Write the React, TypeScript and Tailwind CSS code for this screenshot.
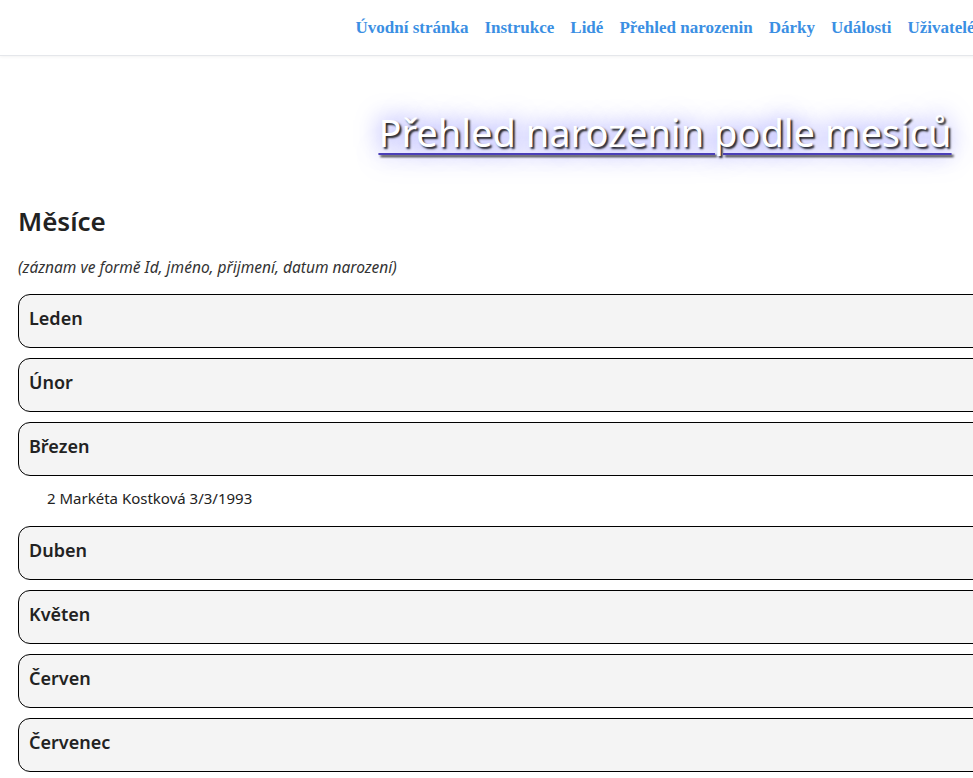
const navItems = ["Úvodní stránka", "Instrukce", "Lidé", "Přehled narozenin", "Dárky", "Události", "Uživatelé"];

const months = [
  { name: "Leden", people: [] as string[] },
  { name: "Únor", people: [] },
  { name: "Březen", people: ["2 Markéta Kostková 3/3/1993"] },
  { name: "Duben", people: [] },
  { name: "Květen", people: [] },
  { name: "Červen", people: [] },
  { name: "Červenec", people: [] },
];

const Header = () => {
  return (
    <header className="h-[56px] border-b border-gray-200 shadow-[0_1px_3px_rgba(0,0,0,0.05)] flex items-center justify-center">
      <nav className="flex gap-[16px] font-['Liberation_Serif',serif] font-bold text-[17px] text-[#3b8fe3]">
        {navItems.map((item) => (
          <a key={item} href="#" className="whitespace-nowrap">
            {item}
          </a>
        ))}
      </nav>
    </header>
  );
};

const MonthItem = ({ name, people }: { name: string; people: string[] }) => {
  return (
    <div className="flex flex-col">
      <div className="h-[54px] flex items-center px-[10px] pb-[5px] bg-[#f4f4f4] border-[1.5px] border-black rounded-[12px] text-[18px] font-semibold text-[#222]">
        {name}
      </div>
      {people.length > 0 && (
        <ul className="pt-[12px] pb-[8px] pl-[29px] text-[15px] leading-[20px] text-[#222]">
          {people.map((p) => (
            <li key={p}>{p}</li>
          ))}
        </ul>
      )}
    </div>
  );
};

export default function App() {
  return (
    <div className="min-w-[1330px] bg-white font-['Noto_Sans','Open_Sans',sans-serif] text-[#222]">
      <Header />
      <main className="px-[18px]">
        <div className="flex justify-center pt-[51px]">
          <h1 className="text-[38px] leading-[50px] text-white underline decoration-[#4b3fb8] decoration-[2px] underline-offset-[6px] [text-shadow:2px_2px_2px_#222,0_0_24px_#5a5aff]">
            Přehled narozenin podle mesíců
          </h1>
        </div>
        <h2 className="mt-[46px] text-[26px] leading-[36px] font-semibold text-[#222]">Měsíce</h2>
        <p className="mt-[17px] text-[15.5px] leading-[22px] italic text-[#333]">(záznam ve formě Id, jméno, přijmení, datum narození)</p>
        <div className="mt-[16px] flex flex-col gap-[10px]">
          {months.map((m) => (
            <MonthItem key={m.name} name={m.name} people={m.people} />
          ))}
        </div>
      </main>
    </div>
  );
}
